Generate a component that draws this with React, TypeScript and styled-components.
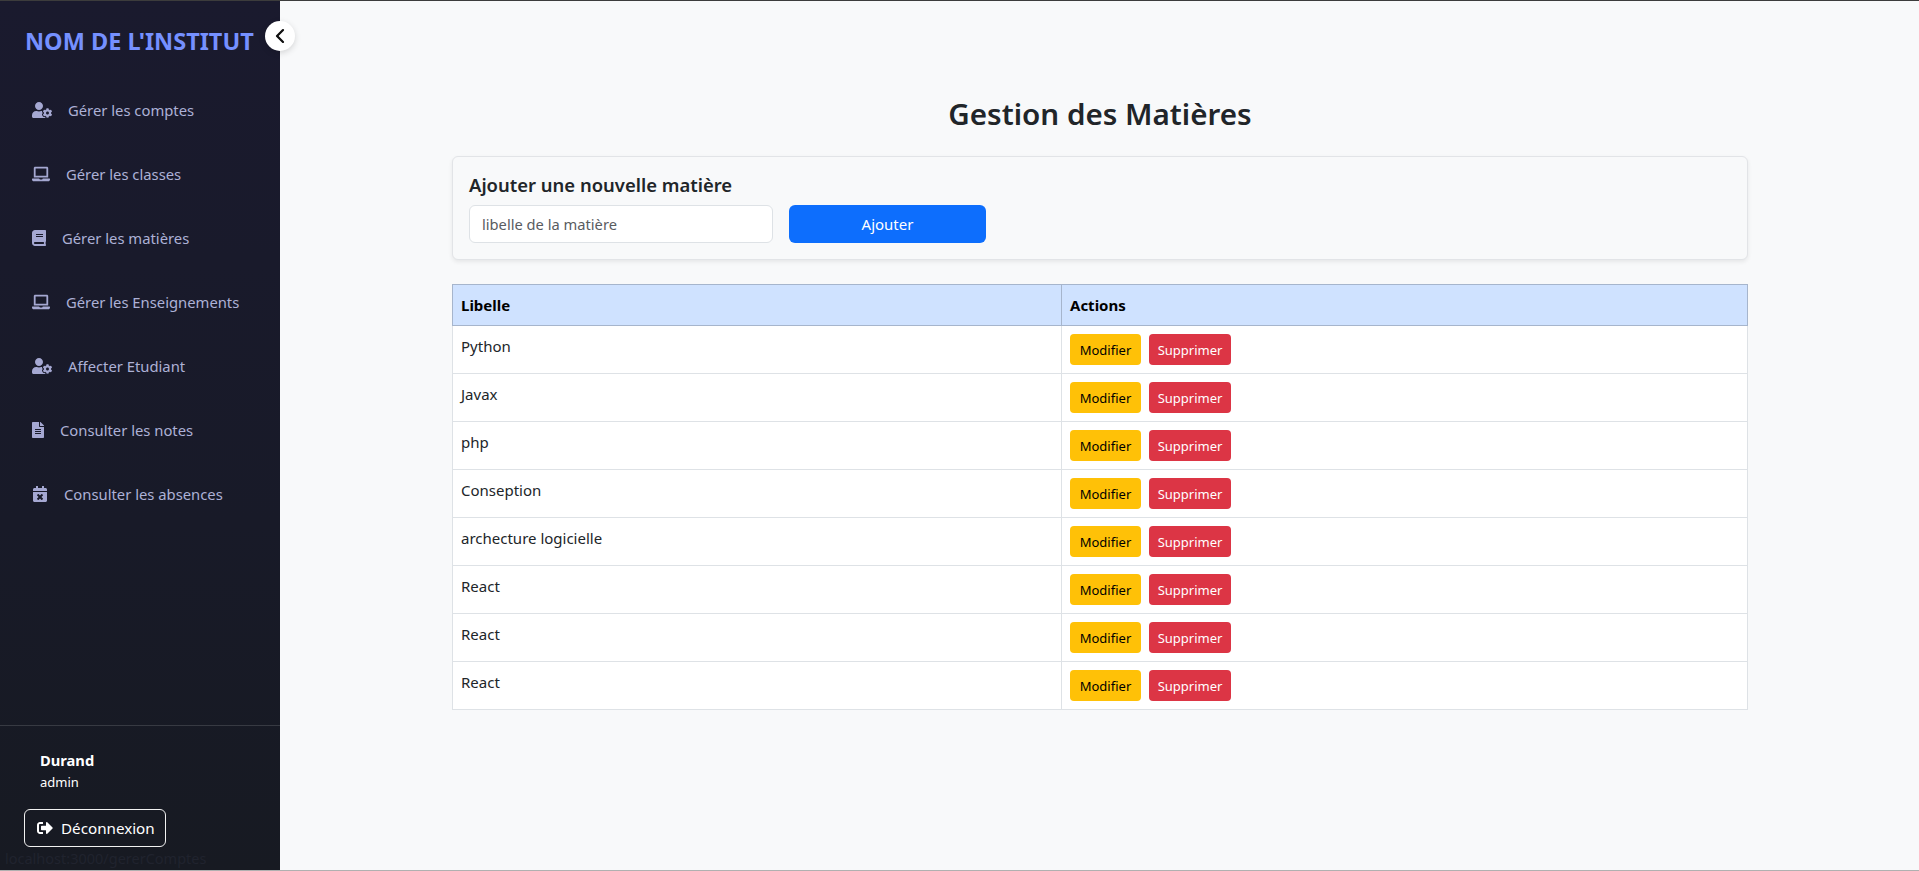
import React from "react";
import styled, { createGlobalStyle } from "styled-components";
import { FaUserCog, FaLaptop, FaBook, FaFileAlt, FaCalendarTimes, FaSignOutAlt } from "react-icons/fa";
import { BsChevronLeft } from "react-icons/bs";

const Global = createGlobalStyle`
  * { box-sizing: border-box; }
  html, body { margin: 0; padding: 0; }
  body { font-family: "Noto Sans", "Open Sans", sans-serif; color: #212529; background: #f8f9fa; }
`;

const Page = styled.div`
  height: 871px;
  display: flex;
  border-top: 1px solid #3c3c3c;
  border-bottom: 1px solid #b0b0b0;
  overflow: hidden;
`;

const Sidebar = styled.aside`
  position: relative;
  width: 280px;
  flex: none;
  display: flex;
  flex-direction: column;
  background: linear-gradient(180deg, #1a1a2e 0%, #181a28 60%, #171a22 100%);
`;

const Brand = styled.h1`
  margin: 0;
  padding: 22px 0 0 25px;
  height: 77px;
  font-size: 23.5px;
  line-height: 36px;
  font-weight: 700;
  color: #7590ff;
  white-space: nowrap;
`;

const Collapse = styled.button`
  position: absolute;
  top: 20px;
  right: -15px;
  width: 30px;
  height: 30px;
  padding: 0;
  border: none;
  border-radius: 50%;
  background: #fff;
  color: #111;
  display: flex;
  align-items: center;
  justify-content: center;
  box-shadow: 0 2px 6px rgba(0, 0, 0, 0.15);
`;

const Nav = styled.nav`
  display: flex;
  flex-direction: column;
`;

const NavItem = styled.a`
  height: 64px;
  padding-left: 32px;
  display: flex;
  align-items: center;
  gap: 16px;
  font-size: 14.8px;
  color: #adb1d6;
  white-space: nowrap;
`;

const IconSlot = styled.span<{ $w: number }>`
  width: ${(p) => p.$w}px;
  flex: none;
  display: flex;
  justify-content: flex-start;
  color: #a5a8d2;
  svg {
    display: block;
    width: ${(p) => p.$w}px;
    height: 16px;
  }
`;

const Footer = styled.div`
  margin-top: auto;
  border-top: 1px solid rgba(255, 255, 255, 0.14);
  padding: 23px 24px 23px;
  color: #fff;
`;

const UserName = styled.div`
  padding-left: 16px;
  font-size: 14.7px;
  line-height: 23px;
  font-weight: 700;
`;

const UserRole = styled.div`
  padding-left: 16px;
  font-size: 13px;
  line-height: 20px;
  margin-bottom: 17px;
`;

const Logout = styled.button`
  width: 142px;
  height: 38px;
  padding: 0 0 0 12px;
  display: flex;
  align-items: center;
  gap: 8px;
  background: transparent;
  border: 1px solid #f1f1f1;
  border-radius: 6px;
  color: #fff;
  font-family: inherit;
  font-size: 15.2px;
`;

const StatusHint = styled.div`
  position: absolute;
  left: 5px;
  bottom: 2px;
  font-size: 14.5px;
  color: #20232e;
`;

const Main = styled.main`
  flex: 1;
  padding: 92px 171px 0 172px;
`;

const Title = styled.h2`
  margin: 0 0 21px;
  text-align: center;
  font-size: 29.6px;
  line-height: 42px;
  font-weight: 600;
  color: #212529;
`;

const Card = styled.section`
  height: 104px;
  padding: 16px;
  background: #f8f9fa;
  border: 1px solid #e2e4e7;
  border-radius: 6px;
  box-shadow: 0 2px 4px rgba(0, 0, 0, 0.075);
  margin-bottom: 24px;
`;

const CardTitle = styled.h3`
  margin: 0 0 8px;
  font-size: 18.45px;
  line-height: 24px;
  font-weight: 600;
  color: #212529;
`;

const FormRow = styled.div`
  display: flex;
  gap: 16px;
`;

const Field = styled.input`
  width: 304px;
  height: 38px;
  padding: 0 12px;
  font-family: inherit;
  font-size: 14.7px;
  border: 1px solid #dee2e6;
  border-radius: 6px;
  background: #fff;
  color: #212529;
  &::placeholder { color: #595c5f; opacity: 1; }
`;

const AddButton = styled.button`
  width: 197px;
  height: 38px;
  border: none;
  border-radius: 6px;
  background: #0d6efd;
  color: #fff;
  font-family: inherit;
  font-size: 15px;
`;

const Table = styled.table`
  width: 100%;
  border-collapse: collapse;
  table-layout: fixed;
  background: #fff;
`;

const HeadCell = styled.th<{ $w?: number }>`
  ${(p) => (p.$w ? `width: ${p.$w}px;` : "")}
  height: 41px;
  padding: 8px;
  text-align: left;
  font-size: 15px;
  line-height: 24px;
  font-weight: 700;
  color: #000;
  background: #cfe2ff;
  border: 1px solid #a6b5cc;
`;

const Cell = styled.td`
  height: 48px;
  padding: 8px;
  vertical-align: top;
  font-size: 15px;
  line-height: 24px;
  color: #212529;
  border: 1px solid #dee2e6;
`;

const Action = styled.button<{ $danger?: boolean }>`
  height: 31px;
  width: ${(p) => (p.$danger ? 82 : 71)}px;
  margin-right: 8px;
  padding: 0;
  vertical-align: top;
  border: none;
  border-radius: 4px;
  font-family: inherit;
  font-size: 13px;
  background: ${(p) => (p.$danger ? "#dc3545" : "#ffc107")};
  color: ${(p) => (p.$danger ? "#fff" : "#000")};
`;

const items = [
  { label: "Gérer les comptes", Icon: FaUserCog, w: 20 },
  { label: "Gérer les classes", Icon: FaLaptop, w: 18 },
  { label: "Gérer les matières", Icon: FaBook, w: 14 },
  { label: "Gérer les Enseignements", Icon: FaLaptop, w: 18 },
  { label: "Affecter Etudiant", Icon: FaUserCog, w: 20 },
  { label: "Consulter les notes", Icon: FaFileAlt, w: 12 },
  { label: "Consulter les absences", Icon: FaCalendarTimes, w: 16 },
];

const subjects = ["Python", "Javax", "php", "Conseption", "archecture logicielle", "React", "React", "React"];

export default function App() {
  return (
    <>
      <Global />
      <Page>
        <Sidebar>
          <Brand>NOM DE L'INSTITUT</Brand>
          <Collapse aria-label="Réduire">
            <BsChevronLeft size={16} strokeWidth={1.2} />
          </Collapse>
          <Nav>
            {items.map(({ label, Icon, w }) => (
              <NavItem key={label}>
                <IconSlot $w={w}>
                  <Icon />
                </IconSlot>
                {label}
              </NavItem>
            ))}
          </Nav>
          <Footer>
            <UserName>Durand</UserName>
            <UserRole>admin</UserRole>
            <Logout>
              <FaSignOutAlt size={16} />
              Déconnexion
            </Logout>
          </Footer>
          <StatusHint>localhost:3000/gererComptes</StatusHint>
        </Sidebar>
        <Main>
          <Title>Gestion des Matières</Title>
          <Card>
            <CardTitle>Ajouter une nouvelle matière</CardTitle>
            <FormRow>
              <Field placeholder="libelle de la matière" />
              <AddButton>Ajouter</AddButton>
            </FormRow>
          </Card>
          <Table>
            <thead>
              <tr>
                <HeadCell $w={609}>Libelle</HeadCell>
                <HeadCell>Actions</HeadCell>
              </tr>
            </thead>
            <tbody>
              {subjects.map((s, i) => (
                <tr key={i}>
                  <Cell>{s}</Cell>
                  <Cell>
                    <Action>Modifier</Action>
                    <Action $danger>Supprimer</Action>
                  </Cell>
                </tr>
              ))}
            </tbody>
          </Table>
        </Main>
      </Page>
    </>
  );
}
